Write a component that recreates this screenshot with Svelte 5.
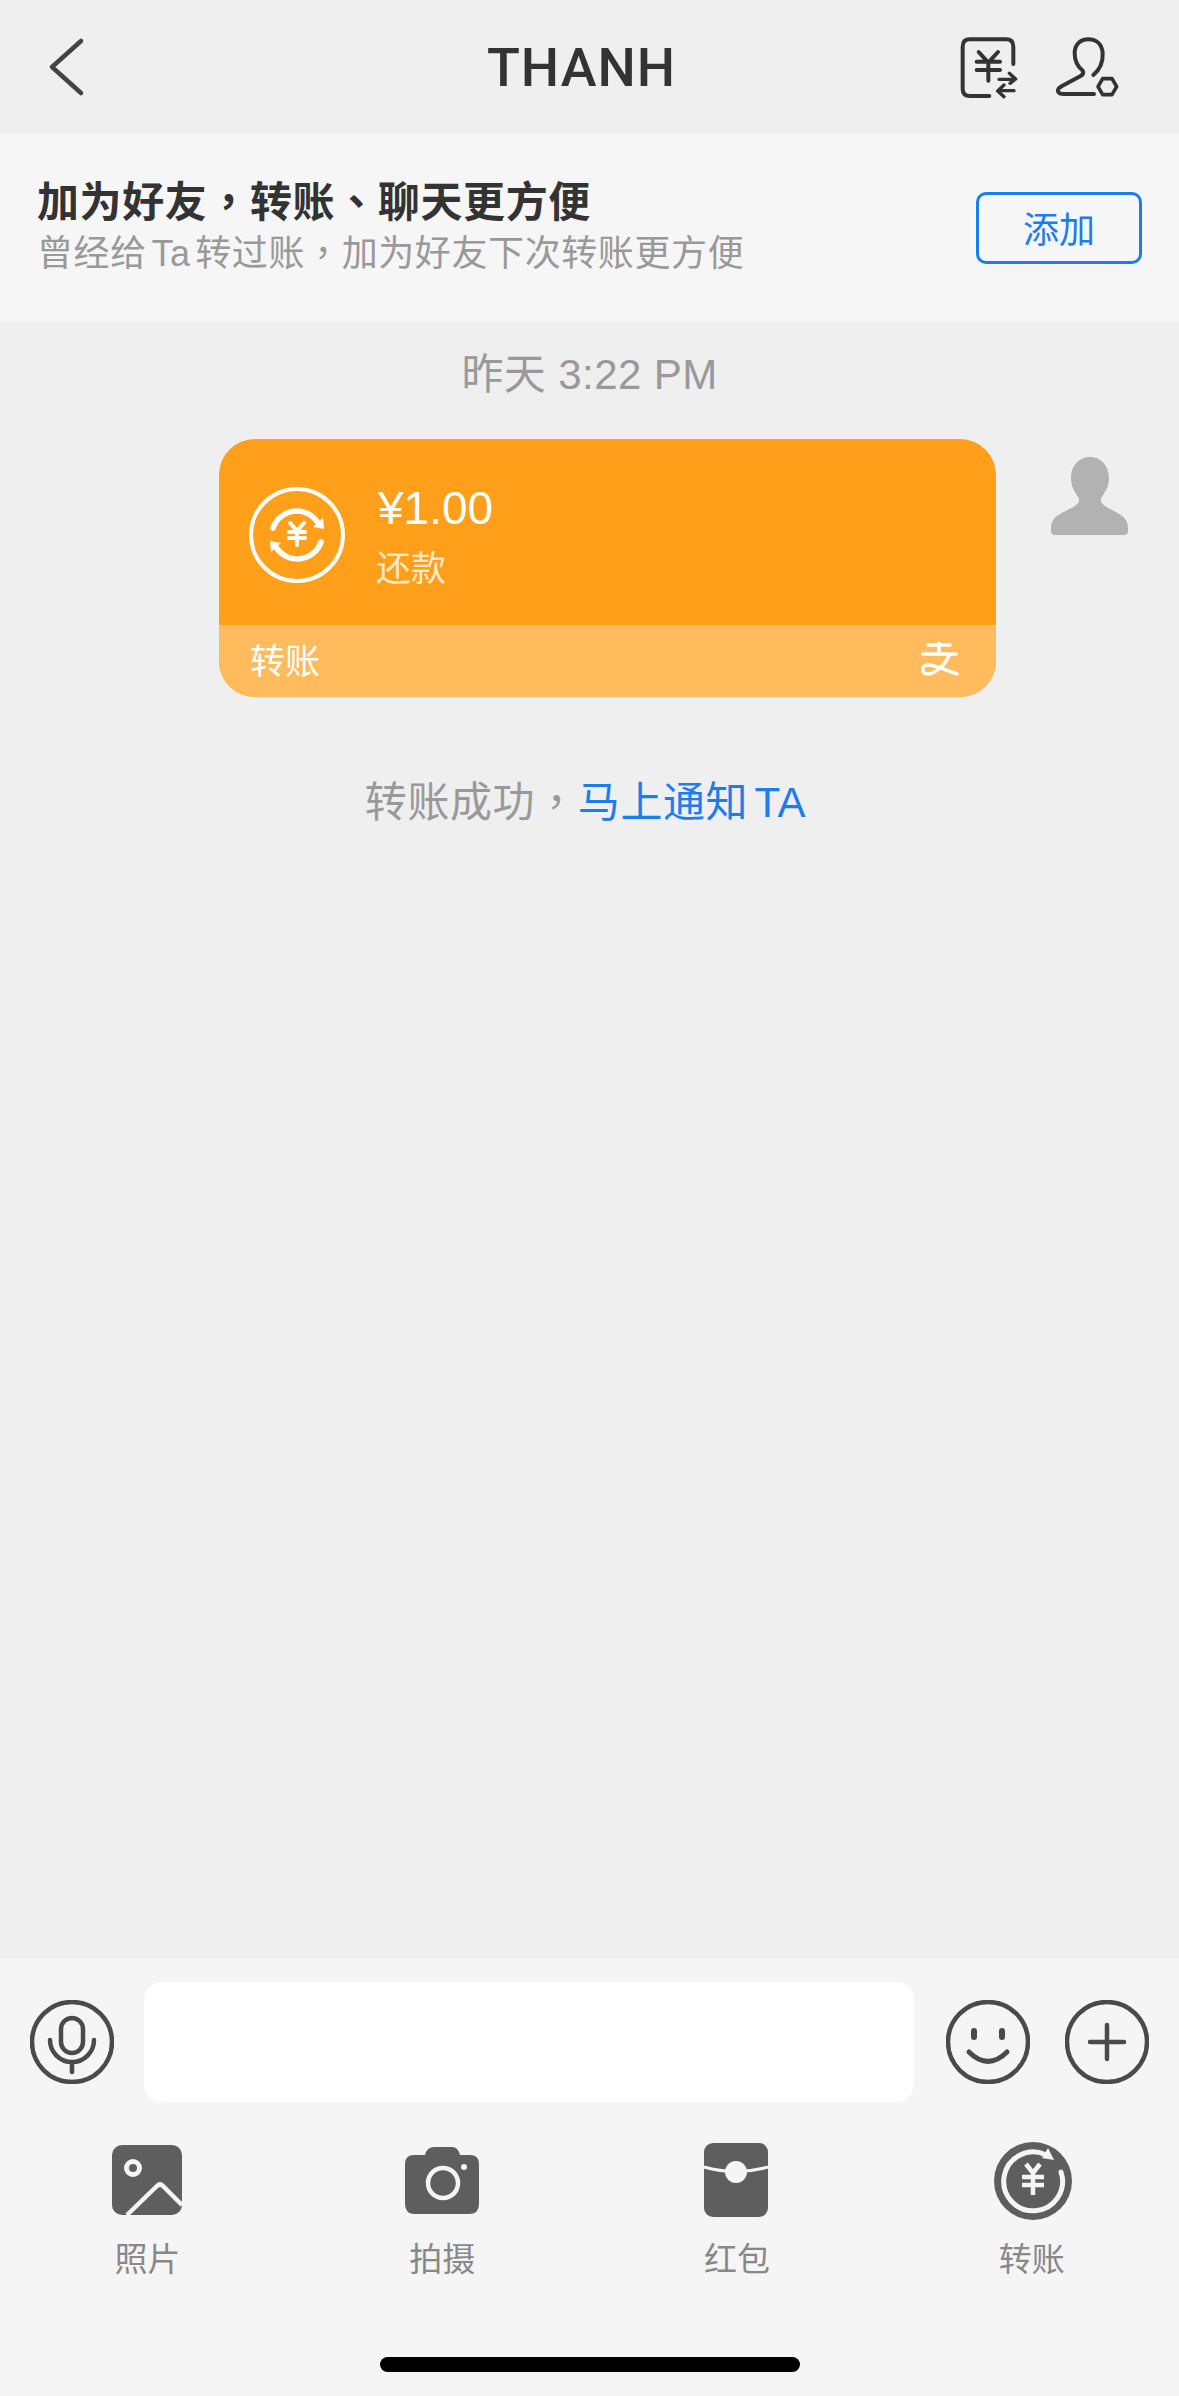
<script lang="ts">
  const tools = [
    { id: 'photo', label: '照片' },
    { id: 'camera', label: '拍摄' },
    { id: 'packet', label: '红包' },
    { id: 'transfer', label: '转账' },
  ];
</script>

<div class="screen">
  <header class="nav">
    <svg class="back" viewBox="0 0 50 70" width="50" height="70" fill="none">
      <path d="M40 9 L11 35 L40 61" stroke="#444" stroke-width="4.5" stroke-linecap="round" stroke-linejoin="round" />
    </svg>
    <h1 class="title">THANH</h1>
    <div class="nav-actions">
      <svg viewBox="78 42 198 198" width="66" height="66" fill="none" stroke="#333" stroke-width="12" stroke-linecap="round" stroke-linejoin="round">
        <path d="M178 228 H120 Q98 228 98 206 V80 Q98 58 120 58 H228 Q250 58 250 80 V132" />
        <path d="M146 96 L175 128 L204 96 M140 125 H210 M140 150 H210 M175 128 V182" />
        <path d="M207 178 H256 M238 160 L257 177 L240 190 M252 212 H204 M222 195 L203 213 L222 230" stroke-width="10" />
      </svg>
      <svg viewBox="366 42 210 198" width="70" height="66" fill="none" stroke="#333" stroke-width="12" stroke-linecap="round" stroke-linejoin="round">
        <path d="M490 165 Q520 140 518 100 C516 72 498 58 475 58 C452 58 434 72 434 100 C434 125 445 142 458 152 Q463 162 452 168 L396 198 Q382 206 384 214 Q387 222 400 222 H492" />
        <path d="M518 176 H546 L560 200 L546 224 H518 L504 200 Z" stroke-width="11" />
      </svg>
    </div>
  </header>

  <section class="banner">
    <div class="banner-text">
      <div class="banner-title">加为好友<span class="tc">，</span>转账<span class="tc">、</span>聊天更方便</div>
      <div class="banner-sub">曾经给 Ta 转过账<span class="tc">，</span>加为好友下次转账更方便</div>
    </div>
    <button class="add-btn">添加</button>
  </section>

  <main class="chat">
    <div class="time">昨天 3:22 PM</div>
    <div class="msg-row">
      <div class="card">
        <div class="card-main">
          <svg class="card-icon" viewBox="0 0 96 96" width="96" height="96" fill="none" stroke="#fff" stroke-linecap="round">
            <circle cx="48" cy="48" r="46" stroke-width="4" />
            <path d="M24 41 A25 25 0 0 1 69 36" stroke-width="5.5" />
            <path d="M72 55 A25 25 0 0 1 27 60" stroke-width="5.5" />
            <path d="M64 40 L75 42 L74 31 Z" fill="#fff" stroke="none" />
            <path d="M32 56 L21 54 L22 65 Z" fill="#fff" stroke="none" />
            <path d="M41 36 L48 44 L55 36 M40 45 H56 M40 51 H56 M48 44 V58" stroke-width="4" />
          </svg>
          <div class="card-text">
            <div class="amount">¥1.00</div>
            <div class="note">还款</div>
          </div>
        </div>
        <div class="card-foot">
          <span>转账</span>
          <svg viewBox="0 0 40 34" width="40" height="34" fill="none" stroke="#fff" stroke-width="3.6" stroke-linecap="round">
            <path d="M8 3 H30 M19 0 V12 M3 12 H36" />
            <path d="M29 13 C26 23 14 32 8 32 C1 32 1 23 8 23 C16 23 27 29 37 32" />
          </svg>
        </div>
      </div>
      <svg class="avatar" viewBox="0 0 78 78" width="78" height="78">
        <path fill="#b2b2b2" d="M39 0 C51 0 58 10 58 21 C58 32 52 37 50 42 C49 48 58 51 68 57 C75 61 77 65 77 72 V74 Q77 78 73 78 H4 Q0 78 0 74 V72 C0 65 2 61 9 57 C20 51 29 48 28 42 C26 37 20 32 20 21 C20 10 27 0 39 0 Z" />
      </svg>
    </div>
    <div class="notice">转账成功<span class="tc">，</span><span class="link">马上通知 TA</span></div>
  </main>

  <footer class="composer">
    <div class="input-row">
      <svg class="round" viewBox="0 0 84 84" width="84" height="84" fill="none" stroke="#4a4a4a" stroke-width="4.5" stroke-linecap="round">
        <circle cx="42" cy="42" r="40" />
        <rect x="31" y="18" width="22" height="35" rx="11" />
        <path d="M20 40 A22 22 0 0 0 64 40 M42 62 V72" />
      </svg>
      <div class="input"></div>
      <svg class="round smile" viewBox="0 0 84 84" width="84" height="84" fill="none" stroke="#4a4a4a" stroke-width="4.5" stroke-linecap="round">
        <circle cx="42" cy="42" r="40" />
        <path d="M28 31 V37 M56 31 V37" stroke-width="6" />
        <path d="M23 52 Q42 71 61 52" stroke-width="5" />
      </svg>
      <svg class="round plus" viewBox="0 0 84 84" width="84" height="84" fill="none" stroke="#4a4a4a" stroke-width="4.5" stroke-linecap="round">
        <circle cx="42" cy="42" r="40" />
        <path d="M42 25 V59 M25 42 H59" />
      </svg>
    </div>

    <div class="tools">
      {#each tools as tool}
        <div class="tool">
          <svg viewBox="0 0 80 80" width="80" height="80">
            {#if tool.id === 'photo'}
              <rect x="5" y="5" width="70" height="70" rx="10" fill="#5e5e5e" />
              <circle cx="26" cy="28" r="6.5" fill="none" stroke="#f5f5f5" stroke-width="5" />
              <path d="M20 75 L50 46 Q53 43 56 46 L75 65" fill="none" stroke="#f5f5f5" stroke-width="4.5" />
            {:else if tool.id === 'camera'}
              <path fill="#5e5e5e" d="M12 15 H23 Q25 7 32 7 H50 Q56 7 58 15 H68 Q77 15 77 24 V64 Q77 74 67 74 H13 Q3 74 3 64 V24 Q3 15 12 15 Z" />
              <circle cx="41" cy="43" r="15" fill="none" stroke="#f5f5f5" stroke-width="4.5" />
              <circle cx="62" cy="27" r="3" fill="#f5f5f5" />
            {:else if tool.id === 'packet'}
              <rect x="7" y="3" width="64" height="74" rx="9" fill="#5e5e5e" />
              <path d="M7 27 Q39 36 71 27" fill="none" stroke="#f5f5f5" stroke-width="3.2" />
              <circle cx="39" cy="32" r="11" fill="#f5f5f5" />
            {:else}
              <circle cx="41" cy="41" r="39" fill="#5e5e5e" />
              <path d="M69 32 A29.4 29.4 0 1 1 53 14.5" fill="none" stroke="#f5f5f5" stroke-width="5" stroke-linecap="round" />
              <path d="M56 8 L62 20 L50 18 Z" fill="#f5f5f5" />
              <path d="M34 24 L41 33 L48 24 M30 37 H52 M30 45 H52 M41 33 V55" fill="none" stroke="#f5f5f5" stroke-width="4.5" />
            {/if}
          </svg>
          <span class="tool-label">{tool.label}</span>
        </div>
      {/each}
    </div>

    <div class="home-bar"></div>
  </footer>
</div>

<style>
  :global(body) {
    margin: 0;
    background: #efefef;
  }

  .screen {
    width: 1179px;
    height: 2396px;
    display: flex;
    flex-direction: column;
    background: #efefef;
    font-family: "Liberation Sans", "Noto Sans CJK SC", sans-serif;
    overflow: hidden;
  }

  /* centred punctuation, as in the original */
  .tc {
    font-family: "Noto Sans CJK TC", sans-serif;
    line-height: 0;
  }

  .nav {
    height: 134px;
    flex-shrink: 0;
    display: grid;
    grid-template-columns: 1fr auto 1fr;
    align-items: center;
    padding: 0 57px 0 41px;
    box-sizing: border-box;
  }

  .back { display: block; }

  .title {
    margin: 0;
    font-family: Roboto, sans-serif;
    font-size: 54px;
    font-weight: 500;
    color: #333;
    letter-spacing: 1px;
  }

  .nav-actions {
    display: flex;
    justify-content: flex-end;
    gap: 30px;
  }

  .banner {
    height: 187px;
    flex-shrink: 0;
    box-sizing: border-box;
    padding: 0 37px;
    display: flex;
    align-items: center;
    justify-content: space-between;
    background: #f6f6f6;
  }

  .banner-title {
    font-size: 42px;
    line-height: 52px;
    font-weight: 700;
    letter-spacing: 0.6px;
    color: #333;
  }

  .banner-sub {
    font-size: 36px;
    line-height: 50px;
    letter-spacing: 0.6px;
    word-spacing: -6px;
    color: #999;
  }

  .add-btn {
    width: 166px;
    height: 72px;
    padding: 0 0 2px;
    border: 3px solid #1c7cf0;
    border-radius: 10px;
    background: transparent;
    color: #1c7cf0;
    font-family: inherit;
    font-size: 36px;
    margin-bottom: -1px;
  }

  .chat {
    flex: 1;
    min-height: 0;
    padding-top: 24px;
  }

  .time {
    height: 60px;
    line-height: 60px;
    margin-bottom: 34px;
    text-align: center;
    font-size: 42px;
    letter-spacing: 0.4px;
    color: #999;
  }

  .msg-row {
    display: flex;
    align-items: flex-start;
    padding-left: 219px;
  }

  .card {
    width: 777px;
    height: 258px;
    border-radius: 36px;
    overflow: hidden;
    background: #ff9f1a;
    color: #fff;
    display: flex;
    flex-direction: column;
  }

  .card-main {
    flex: 1;
    display: flex;
    align-items: flex-start;
    gap: 33px;
    padding: 48px 0 0 30px;
  }

  .card-icon { flex-shrink: 0; }

  .amount {
    font-size: 46px;
    line-height: 44px;
    margin-top: -1px;
  }

  .note {
    font-size: 35px;
    line-height: 50px;
    margin-top: 14px;
    margin-left: -2px;
    color: rgba(255, 255, 255, 0.78);
  }

  .card-foot {
    height: 72px;
    flex-shrink: 0;
    box-sizing: border-box;
    padding: 0 36px 5px 31px;
    display: flex;
    align-items: center;
    justify-content: space-between;
    background: #ffbb5c;
    font-size: 35px;
  }

  .avatar {
    margin: 18px 0 0 55px;
    flex-shrink: 0;
  }

  .notice {
    height: 60px;
    line-height: 60px;
    margin-top: 76px;
    padding-right: 8px;
    text-align: center;
    font-size: 42px;
    letter-spacing: 0.6px;
    word-spacing: -6px;
    color: #999;
  }

  .link { color: #1c7cf0; }

  .composer {
    height: 438px;
    flex-shrink: 0;
    box-sizing: border-box;
    display: flex;
    flex-direction: column;
    background: #f5f5f5;
  }

  .input-row {
    display: flex;
    align-items: center;
    padding: 24px 0 0 30px;
  }

  .round { flex-shrink: 0; }

  .input {
    width: 770px;
    height: 120px;
    margin-left: 30px;
    border-radius: 18px;
    background: #fff;
  }

  .smile { margin-left: 32px; }
  .plus { margin-left: 35px; }

  .tools {
    display: grid;
    grid-template-columns: repeat(4, 1fr);
    margin-top: 38px;
  }

  .tool {
    display: flex;
    flex-direction: column;
    align-items: center;
  }

  .tool-label {
    height: 40px;
    line-height: 40px;
    margin-top: 20px;
    font-size: 33px;
    color: #888;
  }

  .home-bar {
    width: 420px;
    height: 15px;
    margin: auto auto 24px;
    border-radius: 8px;
    background: #000;
  }
</style>
